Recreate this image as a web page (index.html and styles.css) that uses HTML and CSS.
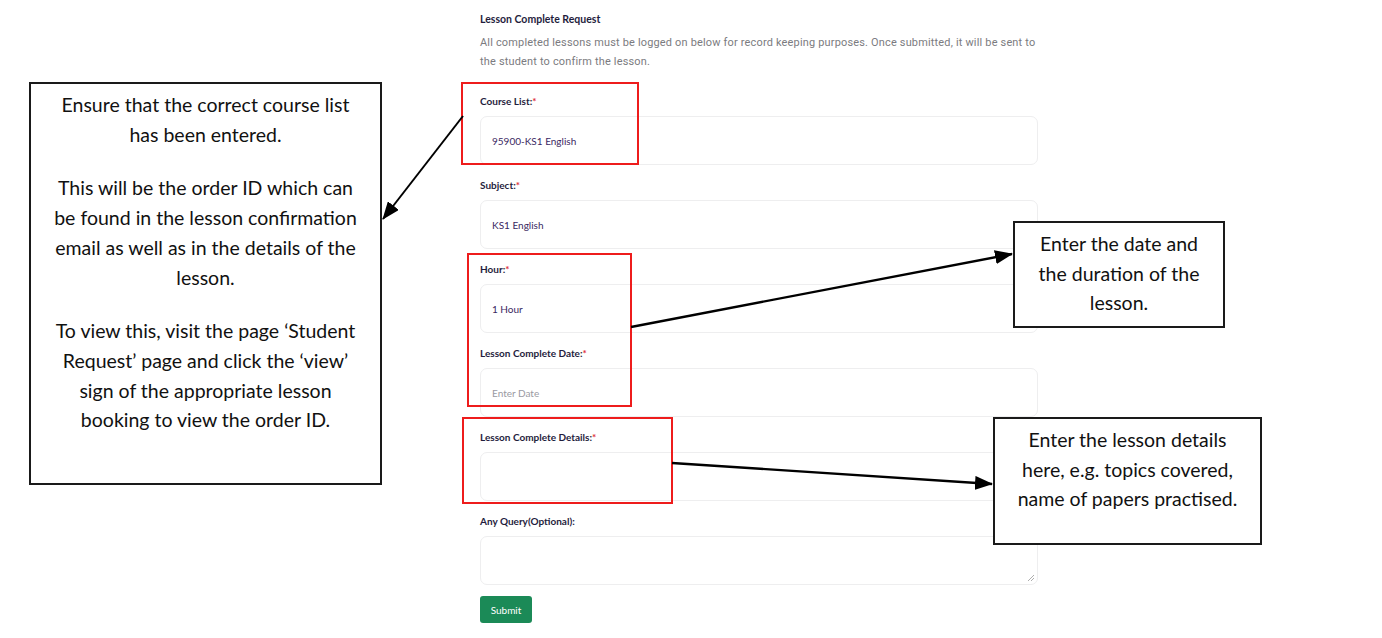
FILE: index.html
```html
<!DOCTYPE html>
<html lang="en">
<head>
<meta charset="utf-8">
<title>Lesson Complete Request</title>
<link rel="stylesheet" href="styles.css">
</head>
<body>
<div class="page">
  <form class="form">
    <h1 class="title">Lesson Complete Request</h1>
    <p class="desc">All completed lessons must be logged on below for record keeping purposes. Once submitted, it will be sent to<br>the student to confirm the lesson.</p>

    <div class="group">
      <label class="label">Course List:<span class="req">*</span></label>
      <div class="input">95900-KS1 English</div>
    </div>
    <div class="group">
      <label class="label">Subject:<span class="req">*</span></label>
      <div class="input">KS1 English</div>
    </div>
    <div class="group">
      <label class="label">Hour:<span class="req">*</span></label>
      <div class="input">1 Hour</div>
    </div>
    <div class="group">
      <label class="label">Lesson Complete Date:<span class="req">*</span></label>
      <div class="input placeholder">Enter Date</div>
    </div>
    <div class="group">
      <label class="label">Lesson Complete Details:<span class="req">*</span></label>
      <div class="input"></div>
    </div>
    <div class="group last">
      <label class="label">Any Query(Optional):</label>
      <div class="input textarea">
        <svg class="grip" width="8" height="8" viewBox="0 0 8 8"><path d="M7 1 L1 7 M7 4 L4 7" stroke="#999" stroke-width="0.8" fill="none"/></svg>
      </div>
    </div>
    <button type="button" class="submit">Submit</button>
  </form>

  <div class="redbox rb1"></div>
  <div class="redbox rb2"></div>
  <div class="redbox rb3"></div>

  <div class="note note-left">
    <p>Ensure that the correct course list<br>has been entered.</p>
    <p>This will be the order ID which can<br>be found in the lesson confirmation<br>email as well as in the details of the<br>lesson.</p>
    <p>To view this, visit the page ‘Student<br>Request’ page and click the ‘view’<br>sign of the appropriate lesson<br>booking to view the order ID.</p>
  </div>
  <div class="note note-date">
    <p>Enter the date and<br>the duration of the<br>lesson.</p>
  </div>
  <div class="note note-details">
    <p>Enter the lesson details<br>here, e.g. topics covered,<br>name of papers practised.</p>
  </div>

  <svg class="arrows" width="1382" height="638" viewBox="0 0 1382 638">
    <defs>
      <marker id="ah" markerUnits="userSpaceOnUse" markerWidth="18" markerHeight="14" refX="17" refY="7" orient="auto">
        <path d="M0 0 L18 7 L0 14 Z" fill="#000"/>
      </marker>
    </defs>
    <line x1="463" y1="116" x2="383" y2="219" stroke="#000" stroke-width="2" marker-end="url(#ah)"/>
    <line x1="631" y1="327" x2="1012" y2="254" stroke="#000" stroke-width="2.4" marker-end="url(#ah)"/>
    <line x1="672" y1="463" x2="992" y2="484" stroke="#000" stroke-width="2.4" marker-end="url(#ah)"/>
  </svg>
</div>
</body>
</html>
```

FILE: styles.css
```css
* { box-sizing: border-box; }
html, body { margin: 0; padding: 0; background: #fff; }
.page {
  position: relative;
  width: 1382px;
  height: 638px;
  overflow: hidden;
  font-family: Lato, "Liberation Sans", sans-serif;
}
.form {
  width: 1038px;
  padding: 12px 0 0 480px;
  display: flex;
  flex-direction: column;
  align-items: flex-start;
}
.title {
  margin: 0;
  font-size: 10.5px;
  line-height: 14px;
  font-weight: 700;
  color: #1f1d3d;
}
.desc {
  margin: 7px 0 0;
  width: 580px;
  font-family: Roboto, "Liberation Sans", sans-serif;
  font-size: 10.95px;
  line-height: 19px;
  letter-spacing: 0.19px;
  color: #7b7b80;
  white-space: nowrap;
}
.group {
  display: flex;
  flex-direction: column;
  width: 558px;
  margin-top: 13px;
}
.group:first-of-type { margin-top: 23px; }
.label {
  font-size: 10px;
  line-height: 14px;
  font-weight: 700;
  color: #1f1d3d;
  margin-bottom: 8px;
}
.req { color: #e0303a; }
.input {
  position: relative;
  height: 49px;
  border: 1px solid #eeeeef;
  border-radius: 7px;
  padding: 0 11px;
  display: flex;
  align-items: center;
  font-size: 10px;
  color: #3a2862;
}
.input.placeholder { color: #9a9aa2; }
.grip { position: absolute; right: 2px; bottom: 2px; }
.submit {
  margin-top: 11px;
  width: 52px;
  height: 27px;
  border: 0;
  border-radius: 3px;
  background: #1b8a57;
  color: #fff;
  font-family: Lato, "Liberation Sans", sans-serif;
  font-size: 10px;
  padding: 0;
}
.redbox {
  position: absolute;
  border: 2px solid #ee1c1c;
}
.rb1 { left: 461px; top: 82px; width: 178px; height: 83px; }
.rb2 { left: 467px; top: 253px; width: 165px; height: 154px; }
.rb3 { left: 462px; top: 417px; width: 211px; height: 87px; }
.note {
  position: absolute;
  border: 2px solid #1a1a1a;
  background: #fff;
  text-align: center;
  font-family: Lato, "Liberation Sans", sans-serif;
  font-size: 19.5px;
  line-height: 29.7px;
  color: #111;
  padding-top: 6px;
}
.note p { margin: 0; }
.note p + p { margin-top: 24px; }
.note-left { left: 29px; top: 82px; width: 353px; height: 403px; }
.note-date { left: 1013px; top: 221px; width: 212px; height: 107px; }
.note-details { left: 993px; top: 417px; width: 269px; height: 128px; }
.arrows { position: absolute; left: 0; top: 0; pointer-events: none; }
```
